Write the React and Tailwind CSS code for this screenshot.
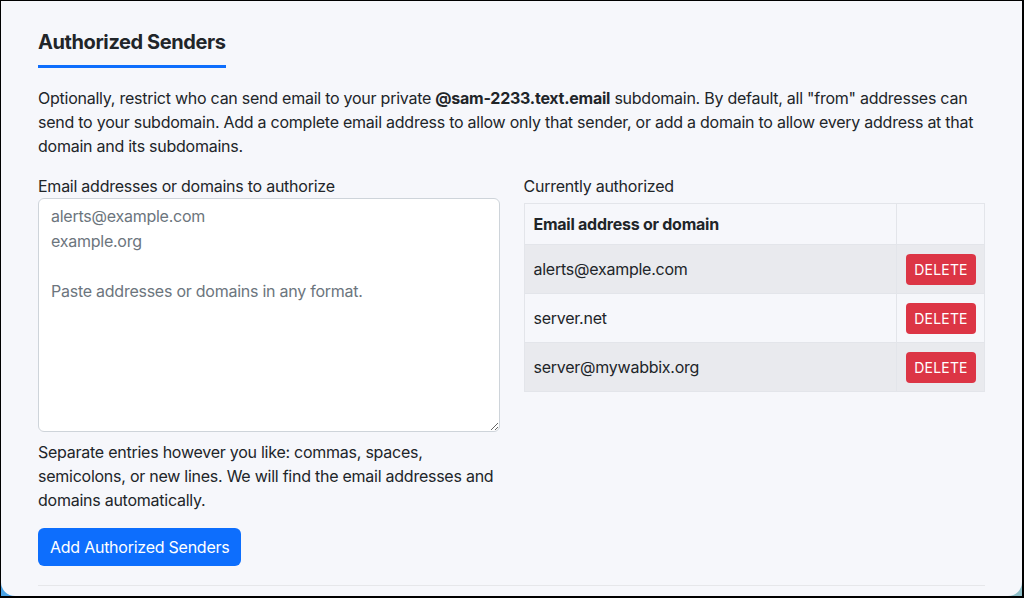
import React, { useState } from "react";

const senders = ["alerts@example.com", "server.net", "server@mywabbix.org"];

const AuthorizedSenders = () => {
  const [entries, setEntries] = useState("");
  const [list, setList] = useState(senders);

  return (
    <div className="px-[37px] pt-[28px] tracking-[-0.25px]">
      <h2 className="inline-block border-b-[3px] border-[#0d6efd] pb-[10px] text-[20px] font-bold leading-[26px] tracking-[-0.4px] text-[#212529]">
        Authorized Senders
      </h2>

      <p className="mt-[18px] text-[16px] leading-[24px] text-[#212529]">
        Optionally, restrict who can send email to your private{" "}
        <strong className="font-bold">@sam-2233.text.email</strong> subdomain. By default, all "from"
        addresses can send to your subdomain. Add a complete email address to allow only that sender,
        or add a domain to allow every address at that domain and its subdomains.
      </p>

      <div className="mt-[16px] grid grid-cols-2 gap-6">
        {/* left: entry form */}
        <div>
          <label className="block text-[16px] leading-[24px] text-[#212529]">
            Email addresses or domains to authorize
          </label>
          <textarea
            value={entries}
            onChange={(e) => setEntries(e.target.value)}
            placeholder={"alerts@example.com\nexample.org\n\nPaste addresses or domains in any format."}
            className="block h-[234px] w-full rounded-[6px] border border-[#ced4da] bg-white px-3 py-[5px] text-[16px] leading-[25px] tracking-[-0.25px] text-[#212529] placeholder:text-[#6c757d] outline-none"
          />
          <p className="mt-[8px] text-[16px] leading-[24px] text-[#212529]">
            Separate entries however you like: commas, spaces, semicolons, or new lines. We will find
            the email addresses and domains automatically.
          </p>
          <button className="mt-[16px] h-[38px] rounded-[6px] bg-[#0d6efd] px-3 text-[16px] tracking-[-0.25px] text-white">
            Add Authorized Senders
          </button>
        </div>

        {/* right: current list */}
        <div>
          <div className="text-[16px] leading-[24px] text-[#212529]">Currently authorized</div>
          <table className="mt-[5px] w-full border-collapse border border-[#e3e5ea] text-[16px] text-[#212529]">
            <thead>
              <tr className="h-[41px]">
                <th className="border border-[#e3e5ea] px-[9px] text-left font-bold">Email address or domain</th>
                <th className="w-[88px] border border-[#e3e5ea]"></th>
              </tr>
            </thead>
            <tbody>
              {list.map((s, i) => (
                <tr key={s} className={i % 2 === 0 ? "h-[49px] bg-[#e9eaee]" : "h-[49px]"}>
                  <td className="border border-[#e3e5ea] px-[9px]">{s}</td>
                  <td className="border border-[#e3e5ea] px-2 text-right">
                    <button
                      onClick={() => setList(list.filter((x) => x !== s))}
                      className="h-[31px] w-[70px] rounded-[4px] bg-[#dc3545] text-[14px] tracking-[0.2px] text-white"
                    >
                      DELETE
                    </button>
                  </td>
                </tr>
              ))}
            </tbody>
          </table>
        </div>
      </div>

      <div className="mt-[19px] border-t border-[#e6e7ea]"></div>
    </div>
  );
};

export default function App() {
  return (
    <div
      className="h-[598px] w-[1024px] overflow-hidden bg-black pl-[1px] pr-[2px] pt-[1px] pb-[2px]"
      style={{ fontFamily: "Inter, 'Liberation Sans', sans-serif" }}
    >
      <div className="h-full bg-gradient-to-r from-[#4aa3e6] to-[#8fbfc8]">
        <div className="h-full overflow-hidden rounded-b-[14px] bg-[#f6f7fb]">
          <AuthorizedSenders />
        </div>
      </div>
    </div>
  );
}
